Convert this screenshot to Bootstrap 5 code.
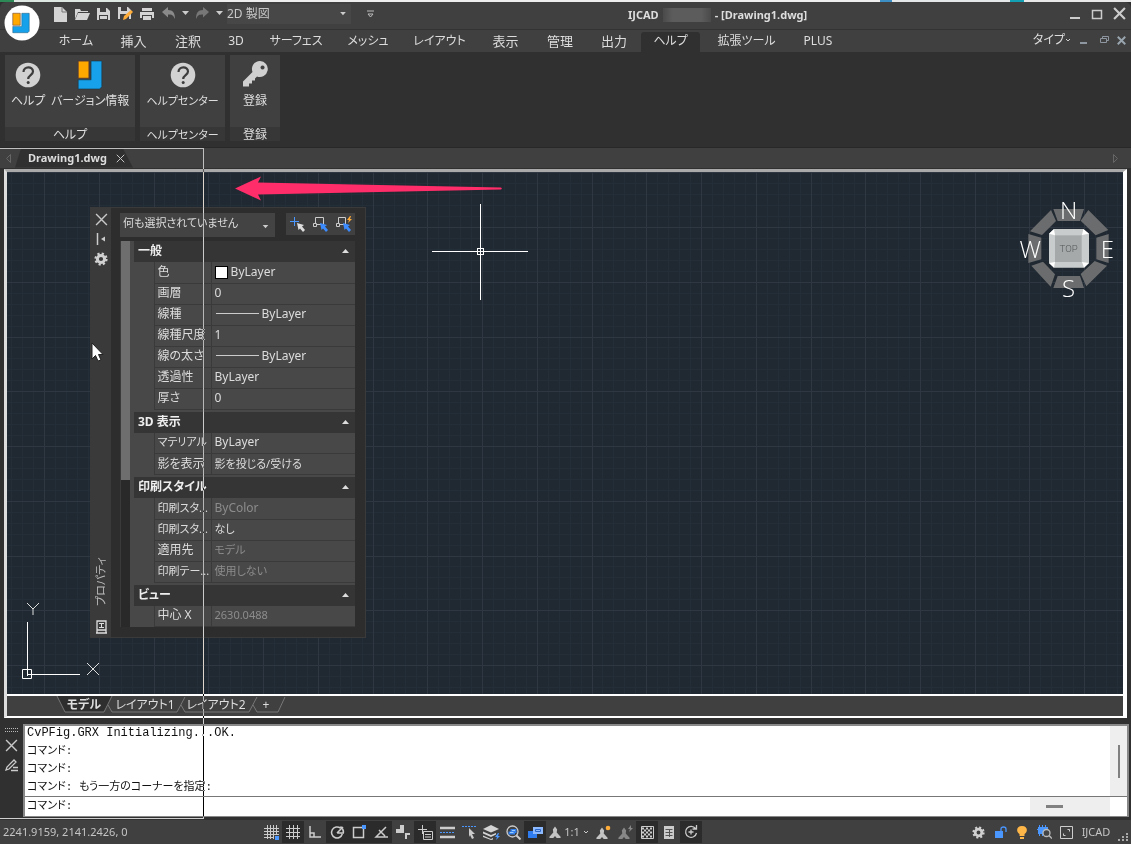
<!DOCTYPE html>
<html lang="ja">
<head>
<meta charset="utf-8">
<meta name="viewport" content="width=device-width, initial-scale=1">
<title>IJCAD - [Drawing1.dwg]</title>
<link href="https://cdn.jsdelivr.net/npm/bootstrap@5.3.0/dist/css/bootstrap.min.css" rel="stylesheet">
<style>
:root { --ui: "Noto Sans", "Noto Sans CJK JP", sans-serif; }
body { font: 12px/18px var(--ui); font-feature-settings: "palt"; color: #ddd; background: #303030; }
button { border: 0; padding: 0; background: none; color: inherit; font: inherit; line-height: inherit; white-space: nowrap; }
svg { display: block; flex: none; }
.desk { height: 2px; background: linear-gradient(90deg, #2c8a57 0 14px, #dfe7e2 14px 150px, #eee 150px 880px, #3b8fc4 880px 892px, #e4e8e8 892px 1010px, #12a0b4 1010px 1024px, #e8e8e8 1024px); }
.titlebar { height: 28px; background: #404040; border-bottom: 1px solid #333; padding: 0 5px 4px 53px; border-radius: 6px 6px 0 0; }
.applogo { left: 4px; top: 3px; width: 36px; height: 36px; z-index: 5; }
.quick { gap: 6px; }
.workspace { width: 124px; height: 20px; background: #474747; color: #c8c8c8; padding-right: 5px; }
.apptitle { font-size: 11px; font-weight: 700; left: 628px; top: 4px; }
.versionbox { width: 48px; height: 14px; background: linear-gradient(90deg, #4a4a4a, #5c5c5c 20% 80%, #4a4a4a); }
.winbtns { gap: 10px; }
.ribbontabs { height: 22px; background: #404040; padding: 2px 5px 0 46px; }
.tabgrid { display: grid; grid-template-columns: 60px 55px 54px 42px 78px 66px 77px 55px 54px 54px 59px 93px 50px; font-size: 13px; line-height: 18px; }
.tabgrid button { padding-bottom: 2px; }
.tabgrid button.active { background: #303030; border-radius: 3px 3px 0 0; }
.tabgrid .latin { font-size: 12px; }
.typemenu { padding-bottom: 4px; }
.ribbon { height: 96px; background: #303030; padding: 3px 5px 6px; gap: 5px; border-bottom: 1px solid #282828; }
.rgroup { background: #404040; display: flex; flex-direction: column; }
.rgroup footer { margin-top: auto; height: 14px; line-height: 16px; text-align: center; background: #373737; }
.rgroup .btnrow { padding: 5px 6px 0; gap: 6px; display: flex; justify-content: center; }
.rgroup .btnrow button { display: flex; flex-direction: column; align-items: center; gap: 2px; min-width: 34px; }
.rgroup svg { width: 30px; height: 30px; }
.g1 { width: 130px; } .g2 { width: 85px; } .g3 { width: 50px; }
.tight, .tabgrid .kana { font-size: 12px; }
.small-kana { font-size: 11px; }
.doctabs { height: 20px; background: #404040; padding-right: 12px; }
.doctab { width: 118px; height: 19px; margin-left: 2px; padding: 0 8px 0 13px; background: #303030; clip-path: polygon(6px 0, 108px 0, 118px 100%, 0 100%); font-weight: 700; font-size: 11px; }
.frame { border: solid; border-width: 3px 4px 2px 3px; border-color: #aaa #fff #fff #ddd; margin: 1px 4px 0 4px; }
.canvas { background: #202831; overflow: hidden; min-height: 200px; border-bottom: 2px solid #fff; }
.float { position: absolute; }
.gridlines { inset: 0; width: 100%; height: 100%; }
.compass { right: 6px; top: 26px; overflow: visible; }
.palette { left: 83px; top: 35px; width: 276px; height: 431px; background: #2d2d2d; border: 1px solid #3a3a3a; }
.rail { width: 21px; background: #3a3a3a; padding: 5px 0 3px; gap: 6px; }
.railname { writing-mode: vertical-rl; text-orientation: sideways; transform: rotate(180deg); line-height: 20px; font-size: 11px; color: #bbb; }
.palbody { padding: 5px 10px 10px 9px; }
.objsel { width: 155px; height: 24px; background: #434343; padding: 0 6px 5px 3px; font-size: 11px; }
.seltools { width: 69px; height: 22px; background: #404040; }
.scrolltrack { width: 11px; background: #292929; border-left: 1px solid #3a3a3a; }
.scrollthumb { height: 239px; width: 9px; background: #6e6e6e; }
.props { background: #484848; padding-left: 4px; gap: 2px; }
.props table { width: 100%; table-layout: fixed; border-collapse: collapse; line-height: 18px; }
.props caption { caption-side: top; padding: 0 6px 0 4px; height: 21px; line-height: 20px; background: #353535; color: #eee; font-weight: 700; }
.props tr { height: 21px; }
.props th, .props td { padding: 0 3px 1px; border-bottom: 1px solid #3a3a3a; border-left: 1px solid #3a3a3a; overflow: hidden; white-space: nowrap; font-weight: 400; }
.props th { width: 57px; padding-right: 0; }
.props tr > :first-child { width: 20px; border: 0; }
.props td.dim { color: #8c8c8c; }
.swatch { width: 13px; height: 13px; background: #fff; border: 1px solid #000; display: inline-block; vertical-align: -3px; }
.linesample { display: inline-block; width: 43px; border-top: 1px solid #ccc; vertical-align: 4px; margin: 0 3px 0 1px; }
.sheettabs { height: 20px; background: #404040; padding-left: 50px; }
.sheetgrid { display: grid; grid-template-columns: 54px 68px 74px 26px; line-height: 17px; }
.cmd { height: 93px; margin-top: 6px; }
.cmdrail { width: 23px; padding-top: 4px; gap: 3px; }
.console { border: 1px solid #888; border-width: 2px 2px 1px 2px; background: #fff; color: #111; margin-right: 2px; font-family: "Liberation Mono", "Noto Sans CJK JP", monospace; }
.history { height: 71px; border-bottom: 1px solid #777; overflow: hidden; }
.history p { margin: 0; padding-left: 2px; }
.vbar { width: 17px; background: #eee; }
.vbar i { width: 2px; height: 33px; background: #808080; }
.hbar { width: 80px; margin-right: 17px; background: #eee; }
.hbar i { width: 17px; height: 3px; background: #808080; }
.entry { padding-left: 2px; font-size: 11px; }
.console input { border: 0; outline: 0; padding: 0; background: none; }
.status { height: 24px; background: #404040; color: #c4c4c4; padding: 0 2px 0 3px; font-size: 11px; margin-top: 3px; }
.coords { width: 257px; }
.status button { width: 22px; height: 22px; display: flex; align-items: center; justify-content: center; }
.status button.on { background: #2b2b2b; }
.status button.scale { width: 46px; gap: 3px; }
.status button.brand { width: 38px; }
.rubber { left: -1px; top: 148px; bottom: 25px; width: 205px; border: 1px solid #fff; mix-blend-mode: difference; pointer-events: none; z-index: 9; }
</style>
</head>
<body>
<svg width="0" height="0" class="float" aria-hidden="true">
  <symbol id="logo" viewBox="0 0 24 28"><path d="M1 1h10v16H1z" fill="#ffa800" stroke="#533" stroke-width=".7"/><path d="M13 1h10v24l-2 2H1v-8.500h12z" fill="#17a1ea" stroke="#134" stroke-width=".5"/></symbol>
  <symbol id="help" viewBox="0 0 30 30"><circle cx="15" cy="15" r="12.300" fill="#d2d2d2"/><path d="M10.500 12c0-6 9.500-6 9.500-.5 0 3.500-4.800 3.800-4.800 7.500" fill="none" stroke="#3d3d3d" stroke-width="2.200"/><circle cx="15.200" cy="22.500" r="1.500" fill="#3d3d3d"/></symbol>
  <symbol id="caret" viewBox="0 0 7 5"><path d="M0 0h7L3.500 4z" fill="#ccc"/></symbol>
  <symbol id="up" viewBox="0 0 7 4"><path d="M0 4h7L3.500 0z" fill="#ddd"/></symbol>
  <symbol id="x" viewBox="0 0 12 12"><path d="M1 1l10 10M11 1L1 11" stroke="#c8c8c8" stroke-width="1.300"/></symbol>
  <symbol id="gear" viewBox="0 0 14 14"><circle cx="7" cy="7" r="5.500" fill="none" stroke="#d0d0d0" stroke-width="2.200" stroke-dasharray="2.200 2.120"/><circle cx="7" cy="7" r="3.600" fill="none" stroke="#d0d0d0" stroke-width="3"/></symbol>
  <symbol id="person" viewBox="0 0 14 14"><path d="M7 0l2.500 3.500L9 7l4.500 5v1.500H9L7 11l-2 2.500H.5V12L5 7l-.5-3.500z" fill="currentColor"/></symbol>
  <symbol id="ptr" viewBox="0 0 8 9"><path d="M0 0l7 2-2 1.500 3 3.500-2 2-3-3.500L1.500 7z" fill="currentColor"/></symbol>
</svg>

<div class="d-flex flex-column min-vh-100 position-relative">
  <div class="desk"></div>
  <header class="position-relative">
    <div class="titlebar d-flex align-items-center">
      <div class="quick d-flex align-items-center">
        <button aria-label="新規"><svg width="15" height="16"><path d="M1 1h8l5 5v10H1z" fill="#d4d4d4"/><path d="M9 1v5h5" fill="none" stroke="#777"/></svg></button>
        <button aria-label="開く"><svg width="16" height="14"><path d="M1 12V2h5l1 2h7v1H4z" fill="#d4d4d4"/><path d="M4 6h12l-3 7H1z" fill="#d4d4d4"/></svg></button>
        <button aria-label="保存"><svg width="15" height="14"><path fill-rule="evenodd" d="M1 1h10l3 3v9H1zM4 1v4h6V1zM3 8v5h9V8z" fill="#d4d4d4"/><path d="M4 9h7v3H4z" fill="#d4d4d4"/></svg></button>
        <button aria-label="名前を付けて保存"><svg width="16" height="15"><path fill-rule="evenodd" d="M1 1h10l3 3v9H1zM4 1v4h6V1zM3 8v5h9V8z" fill="#d4d4d4"/><path d="M6 14l1-4 7-6 2 2-7 7z" fill="#ffac38"/></svg></button>
        <button aria-label="印刷"><svg width="16" height="14"><path d="M3 1h10v3H3zM1 5h14v6h-2V8H3v3H1zM4 9h8v4H4z" fill="#d4d4d4"/></svg></button>
        <button aria-label="元に戻す"><svg width="15" height="13"><path d="M1 5l6-5v3c5 0 7 3 7 9-2-4-3-4.500-7-4.500v3z" fill="#8a8a8a"/></svg></button>
        <button aria-label="元に戻す履歴"><svg width="7" height="5"><use href="#caret"/></svg></button>
        <button aria-label="やり直し"><svg width="15" height="13"><path d="M14 5L8 0v3C3 3 1 6 1 12c2-4 3-4.500 7-4.500v3z" fill="#777"/></svg></button>
        <button aria-label="やり直し履歴"><svg width="7" height="5"><use href="#caret"/></svg></button>
      </div>
      <button class="workspace d-flex align-items-center justify-content-between ms-1"><span>2D 製図</span><svg width="6" height="4"><use href="#caret"/></svg></button>
      <button class="ms-3" aria-label="カスタマイズ"><svg width="7" height="8"><path d="M0 1h7M1 4h5L3.500 7z" stroke="#bbb" fill="none"/></svg></button>
      <div class="apptitle float d-flex align-items-center gap-1"><span>IJCAD</span><span class="versionbox"></span><span>- [Drawing1.dwg]</span></div>
      <div class="winbtns ms-auto d-flex align-items-center">
        <button aria-label="最小化"><svg width="12" height="12"><path d="M1 10h10" stroke="#ccc" stroke-width="2"/></svg></button>
        <button aria-label="最大化"><svg width="12" height="12"><path d="M1.500 2.500h9v8h-9z" fill="none" stroke="#ccc" stroke-width="1.500"/></svg></button>
        <button aria-label="閉じる"><svg width="13" height="13" viewBox="0 0 12 12"><path d="M1 1l10 10M11 1L1 11" stroke="#ccc" stroke-width="2"/></svg></button>
      </div>
    </div>
    <button class="applogo float" aria-label="アプリケーション"><svg width="36" height="36"><circle cx="18" cy="18" r="17.500" fill="#fff"/><svg x="8" y="6" width="18" height="24"><use href="#logo"/></svg></svg></button>
    <nav class="ribbontabs d-flex justify-content-between">
      <div class="tabgrid">
        <button class="kana">ホーム</button><button>挿入</button><button>注釈</button><button class="latin">3D</button><button class="kana">サーフェス</button><button class="kana">メッシュ</button><button class="kana">レイアウト</button><button>表示</button><button>管理</button><button>出力</button><button class="kana active">ヘルプ</button><button class="kana">拡張ツール</button><button class="latin">PLUS</button>
      </div>
      <div class="typemenu d-flex align-items-center gap-2">
        <button class="d-flex align-items-center">タイプ<svg width="6" height="5"><path d="M1 1l2 2 2-2" fill="none" stroke="#ccc"/></svg></button>
        <button aria-label="図面を最小化"><svg width="9" height="8"><path d="M1 7h7" stroke="#8e979f" stroke-width="2"/></svg></button>
        <button class="ms-1" aria-label="図面を元に戻す"><svg width="9" height="8"><path d="M.5 2.500h6v4h-6zM2.500 2V.5h6v4H7" fill="none" stroke="#8e979f"/></svg></button>
        <button aria-label="図面を閉じる"><svg width="9" height="9" viewBox="0 0 12 12"><path d="M1 1l10 10M11 1L1 11" stroke="#9aa6af" stroke-width="2.500"/></svg></button>
      </div>
    </nav>
  </header>

  <section class="ribbon d-flex">
    <div class="rgroup g1"><div class="btnrow">
      <button><svg><use href="#help"/></svg>ヘルプ</button>
      <button><svg><use href="#logo"/></svg>バージョン情報</button></div><footer>ヘルプ</footer></div>
    <div class="rgroup g2 small-kana"><div class="btnrow"><button><svg><use href="#help"/></svg>ヘルプセンター</button></div><footer>ヘルプセンター</footer></div>
    <div class="rgroup g3"><div class="btnrow"><button><svg viewBox="0 0 30 30"><path fill-rule="evenodd" d="M20 1a8 8 0 1 1-3 15.500l-2 2v2h-3v3H9v3H3v-5L12.500 12A8 8 0 0 1 20 1zm2.500 4.500a2 2 0 1 0 .1 0z" fill="#d0d0d0"/></svg>登録</button></div><footer>登録</footer></div>
  </section>

  <div class="doctabs d-flex align-items-center">
    <svg width="13" height="9"><path d="M10.500 .5v8l-4-4z" fill="none" stroke="#666"/></svg>
    <div class="doctab d-flex align-items-center justify-content-between"><span>Drawing1.dwg</span><button aria-label="タブを閉じる"><svg width="9" height="9"><use href="#x"/></svg></button></div>
    <svg class="ms-auto" width="7" height="9"><path d="M1.500 .5v8l4-4z" fill="none" stroke="#666"/></svg>
  </div>

  <main class="frame d-flex flex-column flex-grow-1">
    <div class="canvas position-relative flex-grow-1">
      <svg id="gridlines" class="gridlines float" shape-rendering="crispEdges"></svg>
      <svg class="float" style="left:227px;top:3px" width="272" height="28"><path d="M1 13.500L27 1.500l-3 6L267 12.500q1.500 1 0 2L24 19.500l3 6z" fill="#ff2d69"/></svg>
      <svg class="float" style="left:425px;top:32px" width="98" height="98" shape-rendering="crispEdges"><path d="M0 47.500h96M48.500 0v96M45.500 44.500h6v6h-6z" stroke="#fff" fill="none"/></svg>
      <svg class="float" style="left:13px;top:426px" width="88" height="86"><path d="M7.500 24v54M7 76.500h53M2.500 71.500h9v9h-9z" fill="none" stroke="#fff"/><path d="M7 5l6 6 6-6M13 11v6M67 65l12 12M79 65L67 77" fill="none" stroke="#ddd"/></svg>
      <svg class="compass float" width="102" height="102" viewBox="45 144 306 306">
        <g fill="#6b6c6d"><path d="M160 177h92l-12 36h-67zM265 180l60 60-38 16-45-44zM289 263l37-11v87l-37-11zM284 333l37 14-62 62-17-37zM173 378h67l12 36h-92zM94 347l35-12 36 38-13 37zM124 263v65l-39 11v-87zM90 244l63-64 15 33-42 42z"/></g>
        <path d="M147 251l15-14h88l17 14v88l-15 14h-90l-15-14z" fill="#c9cccc"/><path d="M165 256h80v80h-80z" fill="#a5a9a9"/><path d="M147 251l15-14 3 19zM250 237l17 14-21 4zM267 339l-15 14-6-17zM162 353l-15-14 18-3z" fill="#fff"/>
        <g fill="#fff" font-family="Open Sans" font-weight="300" font-size="72" text-anchor="middle"><text x="206" y="206">N</text><text x="91" y="324">W</text><text x="322" y="324">E</text><text x="206" y="440">S</text></g>
        <text x="206" y="307" fill="#55595b" font-family="Roboto" font-weight="300" font-size="29" text-anchor="middle">TOP</text>
      </svg>

      <aside class="palette float d-flex">
        <div class="rail d-flex flex-column align-items-center">
          <button aria-label="閉じる"><svg width="13" height="13"><use href="#x"/></svg></button>
          <button aria-label="自動的に隠す"><svg width="11" height="14"><path d="M1.500 1v12" stroke="#ccc" stroke-width="1.500"/><path d="M9 4.500v5L5 7z" fill="#ccc"/></svg></button>
          <button aria-label="設定"><svg width="14" height="14"><use href="#gear"/></svg></button>
          <span class="railname mt-auto">プロパティ</span>
          <svg class="mt-2" width="11" height="14"><path d="M1 1h9v9H1zM0 13h11M1 9.500V13M10 9.500V13" fill="none" stroke="#ddd" stroke-width="1.300"/><path d="M3 3.500h5M3 7.500h5M5.500 3v5" stroke="#ddd"/></svg>
        </div>
        <div class="palbody flex-grow-1 d-flex flex-column gap-1">
          <div class="d-flex justify-content-between">
            <button class="objsel d-flex align-items-center justify-content-between">何も選択されていません<svg class="mt-2" width="7" height="4"><use href="#caret"/></svg></button>
            <div class="seltools d-flex align-items-center justify-content-around">
              <button aria-label="PICKADD"><svg width="16" height="16"><path d="M5.500 1v9M1 5.500h9" stroke="#4a97ff"/><svg x="8" y="7" width="8" height="9" color="#ddd"><use href="#ptr"/></svg></svg></button>
              <button aria-label="オブジェクト選択"><svg width="16" height="16"><path d="M3.500 8V1.500h8V8.500H5M1.500 7.500h3v3h-3z" fill="none" stroke="#ccc"/><svg x="8" y="7" width="8" height="9" color="#3c8cff"><use href="#ptr"/></svg></svg></button>
              <button aria-label="クイック選択"><svg width="17" height="16"><path d="M3.500 8V1.500h7V8.500H5M1.500 7.500h3v3h-3z" fill="none" stroke="#ccc"/><path d="M15 0l-3 4h2l-1 3 4-4h-2l1-3z" fill="#ffab38"/><svg x="8" y="7" width="8" height="9" color="#3c8cff"><use href="#ptr"/></svg></svg></button>
            </div>
          </div>
          <div class="d-flex flex-grow-1">
            <div class="scrolltrack"><div class="scrollthumb"></div></div>
            <div class="props flex-grow-1 d-flex flex-column">
              <table><caption><span class="d-flex align-items-center justify-content-between">一般<svg width="7" height="4"><use href="#up"/></svg></span></caption>
                <tr><td></td><th>色</th><td><span class="swatch"></span> ByLayer</td></tr>
                <tr><td></td><th>画層</th><td>0</td></tr>
                <tr><td></td><th>線種</th><td><span class="linesample"></span>ByLayer</td></tr>
                <tr><td></td><th>線種尺度</th><td>1</td></tr>
                <tr><td></td><th>線の太さ</th><td><span class="linesample"></span>ByLayer</td></tr>
                <tr><td></td><th>透過性</th><td>ByLayer</td></tr>
                <tr><td></td><th>厚さ</th><td>0</td></tr>
              </table>
              <table><caption><span class="d-flex align-items-center justify-content-between">3D 表示<svg width="7" height="4"><use href="#up"/></svg></span></caption>
                <tr><td></td><th class="small-kana">マテリアル</th><td>ByLayer</td></tr>
                <tr><td></td><th>影を表示</th><td class="small-kana">影を投じる/受ける</td></tr>
              </table>
              <table><caption><span class="d-flex align-items-center justify-content-between">印刷スタイル<svg width="7" height="4"><use href="#up"/></svg></span></caption>
                <tr><td></td><th class="small-kana">印刷スタ...</th><td class="dim">ByColor</td></tr>
                <tr><td></td><th class="small-kana">印刷スタ...</th><td class="small-kana">なし</td></tr>
                <tr><td></td><th>適用先</th><td class="dim small-kana">モデル</td></tr>
                <tr><td></td><th class="small-kana">印刷テー...</th><td class="dim small-kana">使用しない</td></tr>
              </table>
              <table><caption><span class="d-flex align-items-center justify-content-between">ビュー<svg width="7" height="4"><use href="#up"/></svg></span></caption>
                <tr><td></td><th>中心 X</th><td class="dim small-kana">2630.0488</td></tr>
              </table>
            </div>
          </div>
        </div>
      </aside>
      <svg class="float" style="left:84px;top:170px" width="13" height="20"><path d="M1 1v16l3.500-3.500L7 19l3-1-2.500-5.500H12z" fill="#fff" stroke="#222"/></svg>
    </div>
    <div class="sheettabs position-relative">
      <svg class="float start-0 top-0" width="290" height="19"><path d="M50 0l8 16h39l8-16z" fill="#2e2e2e"/><path d="M50 0l8 16h39l8-16M101 9l4 7h65l8-15M174 9l4 7h64l8-15M246 9l4 7h21l7-15" fill="none" stroke="#777"/></svg>
      <div class="sheetgrid position-relative"><button class="fw-bold">モデル</button><button>レイアウト1</button><button>レイアウト2</button><button>+</button></div>
    </div>
  </main>

  <section class="cmd d-flex">
    <div class="cmdrail d-flex flex-column align-items-center">
      <svg width="14" height="4"><path d="M0 .5h14M0 3.500h14" stroke="#bbb" stroke-dasharray="1 1"/></svg>
      <button class="mt-1" aria-label="閉じる"><svg width="13" height="13"><use href="#x"/></svg></button>
      <button class="mt-1" aria-label="カスタマイズ"><svg width="14" height="13"><path d="M1 11l1-3 7-7 2 2-7 7zM8 8.500h5M6 11.500h7" fill="none" stroke="#ccc" stroke-width="1.300"/></svg></button>
    </div>
    <div class="console flex-grow-1 d-flex flex-column">
      <div class="history d-flex">
        <div class="flex-grow-1 d-flex flex-column justify-content-end"><p>CvPFig.GRX Initializing...OK.</p><p class="small-kana">コマンド:</p><p class="small-kana">コマンド:</p><p class="small-kana">コマンド: もう一方のコーナーを指定:</p></div>
        <div class="vbar d-flex align-items-center justify-content-center"><i></i></div>
      </div>
      <div class="entry d-flex flex-grow-1">
        <label for="cmdline">コマンド:</label><input id="cmdline" class="flex-grow-1" autocomplete="off">
        <div class="hbar d-flex align-items-center ps-3"><i></i></div>
      </div>
    </div>
  </section>

  <footer class="status d-flex align-items-center">
    <span class="coords">2241.9159, 2141.2426, 0</span>
    <button aria-label="スナップ"><svg width="15" height="15"><path d="M3.500 0v14M6.500 0v14M9.500 0v14M12.500 0v10M0 3.500h15M0 6.500h15M0 9.500h15M0 12.500h10" stroke="#ccc"/><path d="M11 11h4v4h-4z" fill="#4a97ff"/></svg></button>
    <button class="on" aria-label="グリッド"><svg width="14" height="14"><path d="M3.500 0v14M7.500 0v14M11.500 0v14M0 3.500h14M0 7.500h14M0 11.500h14" stroke="#ccc"/></svg></button>
    <button aria-label="直交"><svg width="14" height="14"><path d="M2 1v11h11M2 8h4v4" fill="none" stroke="#ccc" stroke-width="1.500"/></svg></button>
    <button class="on" aria-label="極"><svg width="15" height="15"><path d="M10.500 3.200A5.500 5.500 0 1 0 12.300 9M7 8h7M7 8l6-6M10.500 1.500q3 2 3 6" fill="none" stroke="#ccc" stroke-width="1.500"/></svg></button>
    <button class="on" aria-label="Oスナップ"><svg width="14" height="14"><path d="M1.500 2.500h10v10h-10z" fill="none" stroke="#ccc" stroke-width="1.500"/><path d="M10 0h4v4h-4z" fill="#4a97ff"/></svg></button>
    <button class="on" aria-label="Oトラック"><svg width="14" height="14"><path d="M12 2L2 12h12M5 5l6 6" fill="none" stroke="#ccc" stroke-width="1.500"/></svg></button>
    <button aria-label="作図"><svg width="15" height="15"><path d="M4 0h4v8H0V4h4zM9 8h5v2h-3v4H9z" fill="#ccc"/></svg></button>
    <button class="on" aria-label="ダイナミック入力"><svg width="15" height="15"><path d="M4.500 0v9M0 4.500h9M5.500 6.500h9v8h-9zM7 9.500h6M7 12h6" fill="none" stroke="#ccc"/></svg></button>
    <button aria-label="線の太さ"><svg width="15" height="13"><path d="M0 2h15M0 11h15" stroke="#ccc" stroke-width="2.500"/><path d="M0 6.500h15" stroke="#4a97ff" stroke-dasharray="2 1"/></svg></button>
    <button aria-label="選択の循環"><svg width="15" height="15"><path d="M0 1.500h14" stroke="#4a97ff" stroke-dasharray="2 1"/><path d="M7 3l6 6h-3l2 4-2 1-2-4-1 2z" fill="#ccc"/></svg></button>
    <button aria-label="画層"><svg width="17" height="15"><path d="M8 0l8 4-8 3.500L0 4zM0 6.500L8 10l5-2v1.500L8 12 0 8.500zM0 10.500L8 14l2-1v1.500L8 15l-8-3z" fill="#d4d4d4"/><path d="M15 8l-3 4h2l-1 3 4-4h-2l1-3z" fill="#4a97ff"/></svg></button>
    <button aria-label="表示"><svg width="15" height="15"><circle cx="6.500" cy="6.500" r="5.500" fill="none" stroke="#ccc" stroke-width="1.300"/><path d="M2.500 9.500V6.500h2V4h6v4H9v1.500z" fill="#3480ed"/><path d="M4 7.500h3.500M6 5.500h3" stroke="#9cf"/><path d="M10.500 10.500l4 4" stroke="#ccc" stroke-width="2"/></svg></button>
    <button class="on" aria-label="ウィンドウ"><svg width="15" height="13"><path d="M0 5h9v7H0z" fill="#2f7bf0"/><path d="M5 1h10v7H5z" fill="#8db9ff"/><path d="M7.500 3.500h5v2h-5z" fill="none" stroke="#2a66c8"/></svg></button>
    <button class="scale"><svg width="12" height="13"><use href="#person"/></svg>1:1<svg width="6" height="5"><path d="M1 1l2 2 2-2" fill="none" stroke="#ccc"/></svg></button>
    <button aria-label="注釈表示"><svg width="15" height="15"><svg y="2" width="12" height="13"><use href="#person"/></svg><circle cx="12" cy="3" r="2.300" fill="#ffab38"/></svg></button>
    <button aria-label="注釈自動"><svg width="15" height="15" color="#888"><svg y="2" width="12" height="13"><use href="#person"/></svg><path d="M13 0l-3 4h2l-1 3 4-4h-2z" fill="#888"/></svg></button>
    <button class="on" aria-label="透過"><svg width="13" height="13"><path d="M.5.5h12v12H.5z" fill="none" stroke="#ccc"/><path d="M1 2.500h11M1 6.500h11M1 10.500h11" stroke="#ccc" stroke-width="2" stroke-dasharray="2 2"/><path d="M3 4.500h8M3 8.500h8" stroke="#ccc" stroke-width="2" stroke-dasharray="2 2"/></svg></button>
    <button aria-label="プロパティ"><svg width="10" height="13"><path d="M0 0h10v13H0z" fill="#ccc"/><path d="M1.500 3.500h7M1.500 6.500h7M1.500 9.500h7M5.500 3v8" stroke="#555"/></svg></button>
    <button class="on" aria-label="更新"><svg width="14" height="14"><path d="M11.500 3.500A5.500 5.500 0 1 0 12.500 8M8.500 4h4V0M7 4.500v5M4.500 7h5" fill="none" stroke="#ccc" stroke-width="1.300"/></svg></button>
    <div class="ms-auto d-flex align-items-center">
      <button aria-label="設定"><svg width="13" height="13"><use href="#gear"/></svg></button>
      <button aria-label="ロック"><svg width="13" height="12"><path d="M1 5h8v7H1z" fill="#4a97ff"/><path d="M7 5V3q0-2 2.500-2T12 3v3" fill="none" stroke="#4a97ff" stroke-width="1.300"/></svg></button>
      <button aria-label="ヒント"><svg width="10" height="13"><path d="M5 0c6 0 6 6 2.500 8v2h-5V8C-1 6-1 0 5 0zM3 11h4v2H3z" fill="#ffb648"/></svg></button>
      <button aria-label="ハードウェア"><svg width="15" height="14"><path d="M1 2h10v7H1z" fill="#4a97ff"/><path d="M2.500 0v11M5.500 0v11M8.500 0v5M0 4.500h11" stroke="#4a97ff"/><circle cx="9.500" cy="8" r="3.500" fill="#444" stroke="#bbb" stroke-width="1.300"/><path d="M12 10.500l3 3" stroke="#bbb" stroke-width="1.500"/></svg></button>
      <button aria-label="全画面"><svg width="13" height="13"><path d="M.5.5h12v12H.5zM7.500 3.500h2v2M3.500 7.500v2h2" fill="none" stroke="#ccc"/></svg></button>
      <button class="brand">IJCAD</button>
      <svg class="align-self-end" width="14" height="14"><path d="M11 5h2M7 8h2M11 8h2M3 11h2M7 11h2M11 11h2" stroke="#aaa" stroke-width="2"/></svg>
    </div>
  </footer>
  <div class="rubber float"></div>
</div>

<script src="https://cdn.jsdelivr.net/npm/bootstrap@5.3.0/dist/js/bootstrap.bundle.min.js"></script>
<script>
// Drawing grid: a major line every five minor ones, aligned to the drawing origin
(function () {
  const svg = document.getElementById('gridlines');
  const step = 10.95, origin = { x: 37, y: 55 };
  function draw() {
    const w = svg.clientWidth, h = svg.clientHeight;
    let minor = '', major = '';
    for (let i = -5; origin.x + i * step < w; i++) {
      const d = `M${Math.round(origin.x + i * step) + .5} 0v${h}`;
      if (i % 5) minor += d; else major += d;
    }
    for (let i = -5; origin.y + i * step < h; i++) {
      const d = `M0 ${Math.round(origin.y + i * step) + .5}h${w}`;
      if (i % 5) minor += d; else major += d;
    }
    svg.innerHTML = `<path d="${minor}" stroke="#242e38"/><path d="${major}" stroke="#2f3842"/>`;
  }
  draw();
  addEventListener('resize', draw);
})();
</script>
</body>
</html>
